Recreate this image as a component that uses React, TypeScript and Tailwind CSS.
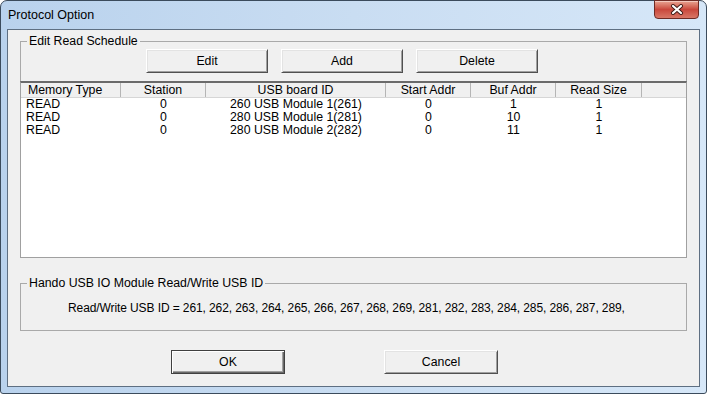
import React from "react";

const font = { fontFamily: '"Liberation Sans", Arial, sans-serif' };

const cols = [
  { w: "w-[100px]", align: "left" },
  { w: "w-[85px]", align: "center" },
  { w: "w-[180px]", align: "center" },
  { w: "w-[85px]", align: "center" },
  { w: "w-[85px]", align: "center" },
  { w: "w-[86px]", align: "center" },
];

const headers = ["Memory Type", "Station", "USB board ID", "Start Addr", "Buf Addr", "Read Size"];

const rows = [
  ["READ", "0", "260 USB Module 1(261)", "0", "1", "1"],
  ["READ", "0", "280 USB Module 1(281)", "0", "10", "1"],
  ["READ", "0", "280 USB Module 2(282)", "0", "11", "1"],
];

function ClassicButton({ label, w, isDefault }: { label: string; w: string; isDefault?: boolean }) {
  return (
    <div
      className={`${w} h-[24px] flex items-center justify-center bg-[#f0f0f0] text-[12.3px] text-black border ${
        isDefault
          ? "border-[#404040] shadow-[inset_1px_1px_0_#ffffff,inset_-1px_-1px_0_#696969,inset_-2px_-2px_0_#a0a0a0]"
          : "border-t-[#ffffff] border-l-[#ffffff] border-r-[#505050] border-b-[#505050] shadow-[inset_1px_1px_0_#e3e3e3,inset_-1px_-1px_0_#a0a0a0]"
      }`}
    >
      {label}
    </div>
  );
}

export default function App() {
  return (
    <div className="w-[707px] h-[394px] overflow-hidden bg-white" style={font}>
      <div className="w-[707px] h-[394px] flex flex-col border border-[#3b4b5c] rounded-t-[7px] rounded-b-[3px] bg-gradient-to-r from-[#b9d2ed] via-[#c9ddf2] to-[#d6e7f8]">
        {/* Title bar */}
        <div className="h-[28px] flex items-start justify-between">
          <div className="pl-[7px] pt-[7px] text-[12.5px] leading-[15px] text-black">Protocol Option</div>
          <div className="mr-[7px] -mt-px w-[45px] h-[19px] rounded-b-[4px] border border-[#6e2b25] bg-gradient-to-b from-[#e8a493] via-[#c9473c] to-[#d87666] flex items-center justify-center shadow-[inset_0_1px_0_#f3c8bd]">
            <svg width="14" height="11" viewBox="0 0 14 11">
              <path d="M3 2 L11 9 M11 2 L3 9" stroke="#3d1a16" strokeWidth="4" strokeLinecap="round" />
              <path d="M3 2 L11 9 M11 2 L3 9" stroke="#ffffff" strokeWidth="2.2" strokeLinecap="round" />
            </svg>
          </div>
        </div>

        {/* Client area */}
        <div className="mx-[6px] mb-[6px] flex-1 border border-[#5e6f82] bg-[#f0f0f0] flex flex-col text-black">
          {/* Group 1 */}
          <div className="relative mx-[12px] mt-[11px] border border-[#a9a9a9] flex flex-col">
            <span className="absolute -top-[8px] left-[6px] px-[2px] bg-[#f0f0f0] text-[12.3px] leading-[14px]">
              Edit Read Schedule
            </span>
            <div className="mt-[7px] flex gap-[13px] pl-[125px]">
              <ClassicButton label="Edit" w="w-[122px]" />
              <ClassicButton label="Add" w="w-[122px]" />
              <ClassicButton label="Delete" w="w-[122px]" />
            </div>
            <div className="-mx-px -mb-px mt-[8px] h-[177px] bg-white border-l border-r border-b border-[#a0a0a0] border-t-2 border-t-[#6a6a6a] flex flex-col">
              <div className="h-[15px] flex bg-[#f0f0f0] border-b border-[#d6d6d6] text-[12.3px] leading-[14px]">
                {headers.map((h, i) => (
                  <div
                    key={h}
                    className={`${cols[i].w} shrink-0 border-r border-[#b5b5b5] ${
                      cols[i].align === "left" ? "pl-[7px] text-left" : "text-center"
                    }`}
                  >
                    {h}
                  </div>
                ))}
              </div>
              {rows.map((r, ri) => (
                <div key={ri} className="h-[13px] flex text-[12.3px] leading-[13px]">
                  {r.map((c, i) => (
                    <div
                      key={i}
                      className={`${cols[i].w} shrink-0 whitespace-nowrap ${
                        cols[i].align === "left" ? "pl-[5px] text-left" : "text-center"
                      }`}
                    >
                      {c}
                    </div>
                  ))}
                </div>
              ))}
            </div>
          </div>

          {/* Group 2 */}
          <div className="relative mx-[12px] mt-[25px] h-[48px] border border-[#a9a9a9]">
            <span className="absolute -top-[8px] left-[6px] px-[2px] bg-[#f0f0f0] text-[12.3px] leading-[14px] whitespace-nowrap">
              Hando USB IO Module Read/Write USB ID
            </span>
            <div className="pt-[17px] pl-[47px] text-[12px] leading-[14px] whitespace-nowrap tracking-[-0.1px]">
              Read/Write USB ID = 261, 262, 263, 264, 265, 266, 267, 268, 269, 281, 282, 283, 284, 285, 286, 287, 289,
            </div>
          </div>

          {/* Bottom buttons */}
          <div className="mt-[19px] flex pl-[163px] gap-[99px]">
            <ClassicButton label="OK" w="w-[114px]" isDefault />
            <ClassicButton label="Cancel" w="w-[114px]" />
          </div>
        </div>
      </div>
    </div>
  );
}
